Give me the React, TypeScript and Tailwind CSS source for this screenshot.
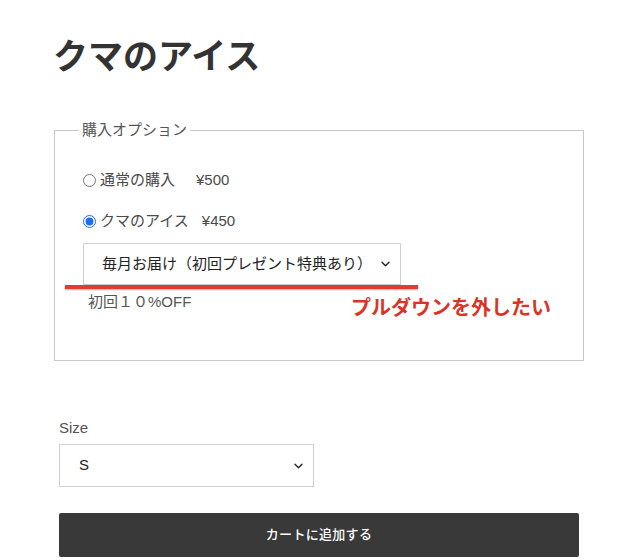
import { useState } from "react";

const Chevron = ({ className }: { className: string }) => (
  <svg
    width="9"
    height="6"
    viewBox="0 0 9 6"
    fill="none"
    className={"pointer-events-none absolute top-1/2 -translate-y-1/2 " + className}
  >
    <path d="M1 1.2l3.5 3.5 3.5-3.5" stroke="#222" strokeWidth="1.4" strokeLinecap="round" strokeLinejoin="round" />
  </svg>
);

export default function App() {
  const [plan, setPlan] = useState("subscribe");

  return (
    <div className="min-h-[560px] bg-white pl-[54px] pt-[36px] font-[Liberation_Sans,Noto_Sans_CJK_JP,sans-serif] text-[#4a4a4a]">
      <h1 className="-ml-[1px] text-[35px] font-bold leading-[42px] text-[#333]">クマのアイス</h1>

      <fieldset className="mt-[42px] w-[530px] border border-[#c8c8c8] pb-[48px] pl-[28px] pt-[30px]">
        <legend className="-ml-[4px] px-[3px] text-[15px] leading-[20px] text-[#555]">購入オプション</legend>

        <label className="flex h-[20px] items-center text-[15px]">
          <input
            type="radio"
            name="plan"
            checked={plan === "once"}
            onChange={() => setPlan("once")}
            className="m-0 h-[13px] w-[13px] accent-[#1a6ff0]"
          />
          <span className="ml-[4px]">通常の購入</span>
          <span className="ml-[21px]">¥500</span>
        </label>

        <label className="mt-[21px] flex h-[20px] items-center text-[15px]">
          <input
            type="radio"
            name="plan"
            checked={plan === "subscribe"}
            onChange={() => setPlan("subscribe")}
            className="m-0 h-[13px] w-[13px] accent-[#1a6ff0]"
          />
          <span className="ml-[4px]">クマのアイス</span>
          <span className="ml-[13px]">¥450</span>
        </label>

        <div className="relative mt-[12px] w-[318px]">
          <div className="relative">
            <select className="h-[42px] w-[318px] appearance-none border border-[#cfcfcf] bg-white pl-[18px] text-[15px] text-[#222] outline-none">
              <option>毎月お届け（初回プレゼント特典あり）</option>
            </select>
            <Chevron className="right-[11px]" />
          </div>
          <div className="absolute left-[-18px] top-[42px] h-[4px] w-[353px] bg-[#e23b30] shadow-[0_1px_2px_rgba(0,0,0,0.3)]" />
          <p className="absolute left-[268px] top-[53px] whitespace-nowrap text-[20px] font-bold leading-[24px] text-[#dc3328]">
            プルダウンを外したい
          </p>
        </div>

        <p className="ml-[5px] mt-[7px] text-[15px] leading-[20px] text-[#555]">初回１０%OFF</p>
      </fieldset>

      <div className="ml-[5px]">
        <p className="mt-[57px] text-[15px] leading-[20px] text-[#555]">Size</p>
        <div className="relative mt-[6px] w-[255px]">
          <select className="h-[43px] w-[255px] appearance-none border border-[#cfcfcf] bg-white pl-[19px] text-[15px] text-[#222] outline-none">
            <option>S</option>
            <option>M</option>
            <option>L</option>
          </select>
          <Chevron className="right-[11px]" />
        </div>
        <button
          type="button"
          className="mt-[26px] h-[44px] w-[520px] rounded-[2px] bg-[#393939] text-[13px] font-medium tracking-[0.3px] text-white"
        >
          カートに追加する
        </button>
      </div>
    </div>
  );
}
